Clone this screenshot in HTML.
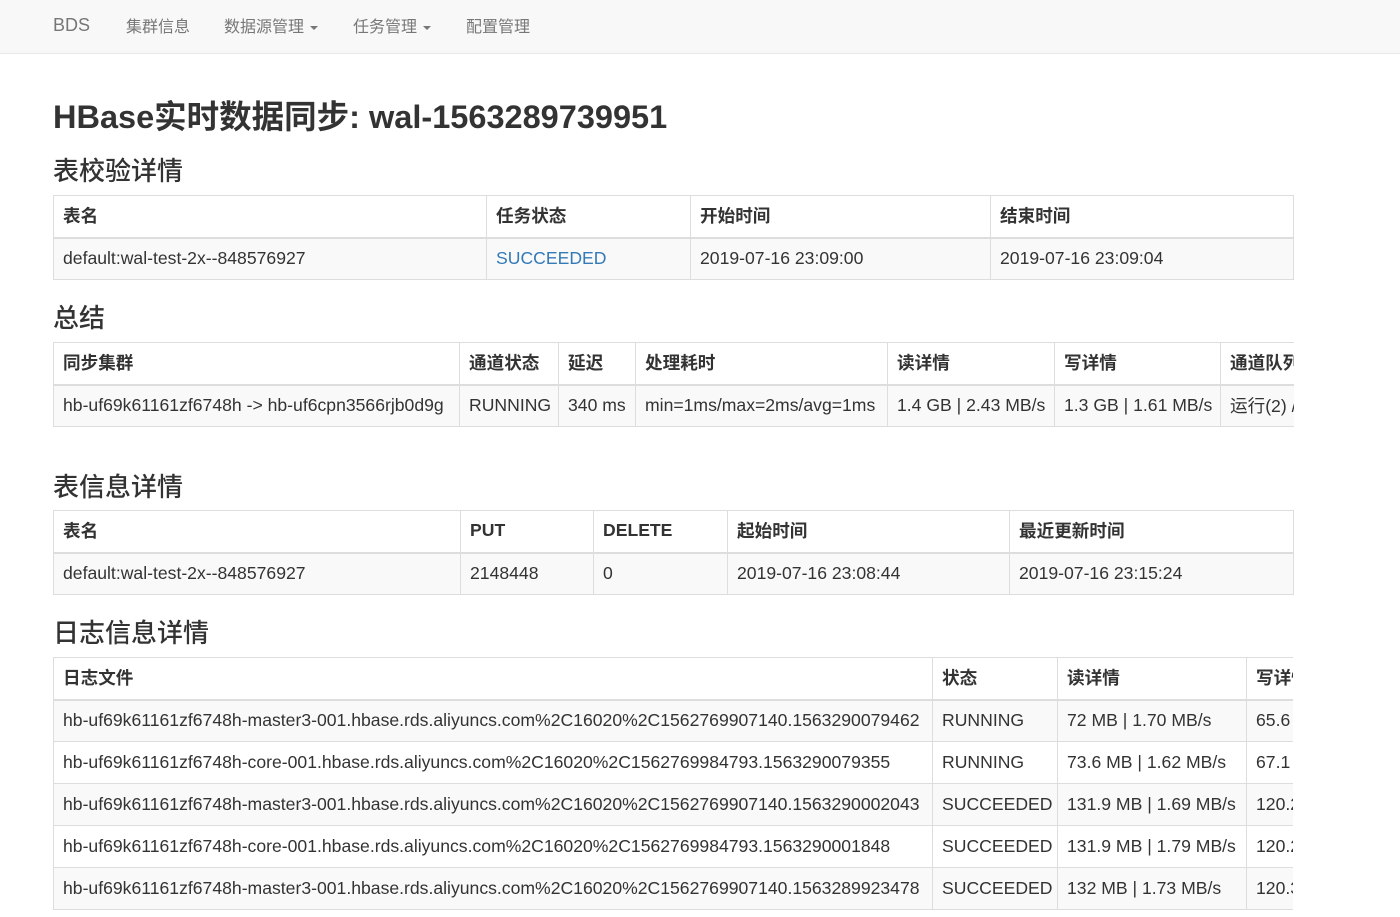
<!DOCTYPE html>
<html><head><meta charset="utf-8"><style>
*{box-sizing:border-box}
body{margin:0;width:1400px;height:907px;overflow:hidden;background:#fff;font-family:"Liberation Sans","Noto Sans CJK SC",sans-serif;color:#333}
.nav{position:absolute;left:0;top:0;width:1400px;height:54px;background:#f8f8f8;border-bottom:1px solid #e7e7e7}
.nav span{position:absolute;top:13px;font-size:16px;color:#777}
.caret{display:inline-block;width:0;height:0;border-left:4px solid transparent;border-right:4px solid transparent;border-top:4px solid #777;vertical-align:middle;margin-left:6px}
h1,h3{position:absolute;left:53px;margin:0;font-weight:bold;color:#333;white-space:nowrap}
h1{font-size:32.5px;top:91px}
h3{font-size:26px;font-weight:500}
.wrap{position:absolute;left:53px;width:1241px;overflow:hidden}
table{border-collapse:collapse;table-layout:fixed;font-size:17.6px}
td,th{border:1px solid #ddd;height:42px;padding:0 9px;white-space:nowrap;overflow:hidden;text-align:left}
th{font-weight:bold;border-bottom:2px solid #ddd;padding-bottom:2px}
tbody tr:nth-child(odd){background:#f9f9f9}
.blue{color:#337ab7}
</style></head><body>
<div class="nav">
<span style="left:53px;font-size:18px;top:15px">BDS</span>
<span style="left:126px">集群信息</span>
<span style="left:224px">数据源管理<i class="caret"></i></span>
<span style="left:353px">任务管理<i class="caret"></i></span>
<span style="left:466px">配置管理</span>
</div>
<h1>HBase实时数据同步: wal-1563289739951</h1>
<h3 style="top:151px">表校验详情</h3>
<div class="wrap" style="top:195px"><table style="width:1240px">
<colgroup><col style="width:433px"><col style="width:204px"><col style="width:300px"><col style="width:303px"></colgroup>
<thead><tr><th>表名</th><th>任务状态</th><th>开始时间</th><th>结束时间</th></tr></thead>
<tbody><tr><td>default:wal-test-2x--848576927</td><td class="blue">SUCCEEDED</td><td>2019-07-16 23:09:00</td><td>2019-07-16 23:09:04</td></tr></tbody></table></div>
<h3 style="top:298px">总结</h3>
<div class="wrap" style="top:342px"><table style="width:1400px">
<colgroup><col style="width:406px"><col style="width:99px"><col style="width:77px"><col style="width:252px"><col style="width:167px"><col style="width:166px"><col style="width:233px"></colgroup>
<thead><tr><th>同步集群</th><th>通道状态</th><th>延迟</th><th>处理耗时</th><th>读详情</th><th>写详情</th><th>通道队列</th></tr></thead>
<tbody><tr><td>hb-uf69k61161zf6748h -&gt; hb-uf6cpn3566rjb0d9g</td><td>RUNNING</td><td>340 ms</td><td>min=1ms/max=2ms/avg=1ms</td><td>1.4 GB | 2.43 MB/s</td><td>1.3 GB | 1.61 MB/s</td><td>运行(2) / 等待(0)</td></tr></tbody></table></div>
<h3 style="top:467px">表信息详情</h3>
<div class="wrap" style="top:510px"><table style="width:1240px">
<colgroup><col style="width:407px"><col style="width:133px"><col style="width:134px"><col style="width:282px"><col style="width:284px"></colgroup>
<thead><tr><th>表名</th><th>PUT</th><th>DELETE</th><th>起始时间</th><th>最近更新时间</th></tr></thead>
<tbody><tr><td>default:wal-test-2x--848576927</td><td>2148448</td><td>0</td><td>2019-07-16 23:08:44</td><td>2019-07-16 23:15:24</td></tr></tbody></table></div>
<h3 style="top:613px">日志信息详情</h3>
<div class="wrap" style="top:657px;height:260px;width:1240px"><table style="width:1400px">
<colgroup><col style="width:879px"><col style="width:125px"><col style="width:189px"><col style="width:207px"></colgroup>
<thead><tr><th>日志文件</th><th>状态</th><th>读详情</th><th>写详情</th></tr></thead>
<tbody>
<tr><td>hb-uf69k61161zf6748h-master3-001.hbase.rds.aliyuncs.com%2C16020%2C1562769907140.1563290079462</td><td>RUNNING</td><td>72 MB | 1.70 MB/s</td><td>65.6 MB | 1.5 MB/s</td></tr>
<tr><td>hb-uf69k61161zf6748h-core-001.hbase.rds.aliyuncs.com%2C16020%2C1562769984793.1563290079355</td><td>RUNNING</td><td>73.6 MB | 1.62 MB/s</td><td>67.1 MB | 1.5 MB/s</td></tr>
<tr><td>hb-uf69k61161zf6748h-master3-001.hbase.rds.aliyuncs.com%2C16020%2C1562769907140.1563290002043</td><td>SUCCEEDED</td><td>131.9 MB | 1.69 MB/s</td><td>120.2 MB | 1.5 MB/s</td></tr>
<tr><td>hb-uf69k61161zf6748h-core-001.hbase.rds.aliyuncs.com%2C16020%2C1562769984793.1563290001848</td><td>SUCCEEDED</td><td>131.9 MB | 1.79 MB/s</td><td>120.2 MB | 1.6 MB/s</td></tr>
<tr><td>hb-uf69k61161zf6748h-master3-001.hbase.rds.aliyuncs.com%2C16020%2C1562769907140.1563289923478</td><td>SUCCEEDED</td><td>132 MB | 1.73 MB/s</td><td>120.3 MB | 1.5 MB/s</td></tr>
</tbody></table></div>
</body></html>
